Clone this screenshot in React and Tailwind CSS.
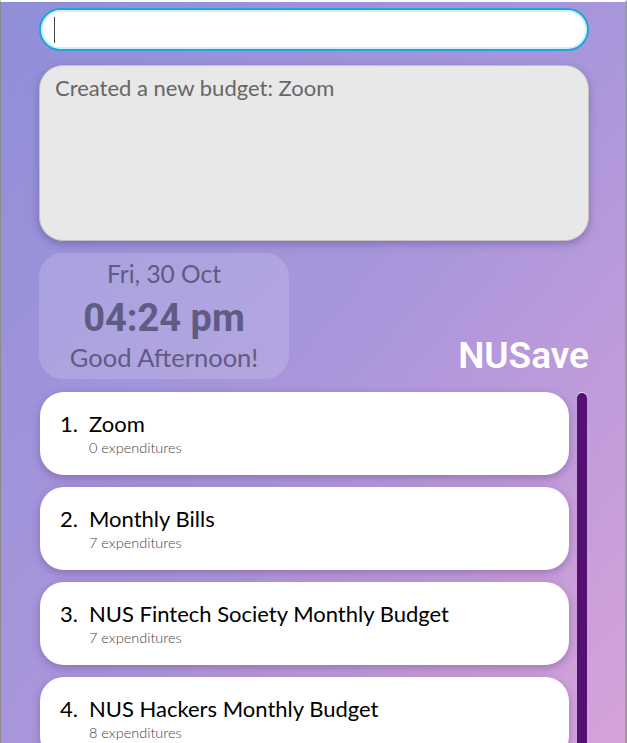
const budgets = [
  { name: "Zoom", count: 0 },
  { name: "Monthly Bills", count: 7 },
  { name: "NUS Fintech Society Monthly Budget", count: 7 },
  { name: "NUS Hackers Monthly Budget", count: 8 },
];

function BudgetCard({ index, name, count }) {
  return (
    <div className="h-[83px] shrink-0 bg-white rounded-[24px] shadow-[0_3px_8px_rgba(80,40,110,0.35)] pl-[20px] pt-[18px]">
      <div className="flex text-[22px] leading-[28px] text-black">
        <span className="w-[29px]">{index}.</span>
        <span>{name}</span>
      </div>
      <p className="pl-[29px] mt-[1px] text-[14.5px] leading-[17px] font-light text-[#444]">
        {count} expenditures
      </p>
    </div>
  );
}

export default function App() {
  return (
    <div
      className="relative w-[627px] h-[743px] overflow-hidden bg-gradient-to-br from-[#8f8fd9] via-[#a996db] to-[#d7a2da] border-l border-[#8a8a8a] border-r-2 border-r-[#9a9a9a] border-t-2 border-t-white"
      style={{ fontFamily: "Lato, 'Open Sans', sans-serif" }}
    >
      <div className="pl-[38px] pr-[36px] pt-[6px] flex flex-col">
        {/* Command box */}
        <div className="h-[43px] rounded-full bg-white border-2 border-[#1fa5dc] shadow-[inset_0_0_0_2px_#d4effa] flex items-center pl-[13px]">
          <span className="w-px h-[26px] bg-[#444]" />
        </div>

        {/* Result box */}
        <div className="mt-[14px] h-[176px] rounded-[24px] bg-[#e8e8e8] border border-[#c4c4c4] shadow-[0_3px_8px_rgba(60,40,100,0.35)] px-[15px] pt-[8px]">
          <p className="text-[22px] leading-[28px] text-[#666]">Created a new budget: Zoom</p>
        </div>

        {/* Clock + title */}
        <div className="mt-[12px] flex items-end justify-between">
          <div className="w-[250px] h-[126px] rounded-[24px] bg-white/15 flex flex-col items-center pt-[6px] text-[#5f5b82]">
            <p className="text-[24.5px] leading-[30px]">Fri, 30 Oct</p>
            <p
              className="text-[38px] leading-[44px] font-bold mt-[7px]"
              style={{ fontFamily: "Roboto, sans-serif" }}
            >
              04:24 pm
            </p>
            <p className="text-[25.5px] leading-[30px] mt-[2px]">Good Afternoon!</p>
          </div>
          <p
            className="text-[37px] leading-[40px] font-semibold text-white mb-[3px]"
            style={{ fontFamily: "Roboto, sans-serif" }}
          >
            NUSave
          </p>
        </div>

        {/* Budget list */}
        <div className="mt-[13px] flex gap-[8px]">
          <div className="w-[530px] flex flex-col gap-[12px] pl-px">
            {budgets.map((b, i) => (
              <BudgetCard key={b.name} index={i + 1} name={b.name} count={b.count} />
            ))}
          </div>
          <div className="w-[10px] h-[400px] mt-[1px] rounded-t-full bg-[#551074] shadow-[0_-1px_0_rgba(255,255,255,0.6)]" />
        </div>
      </div>
    </div>
  );
}
